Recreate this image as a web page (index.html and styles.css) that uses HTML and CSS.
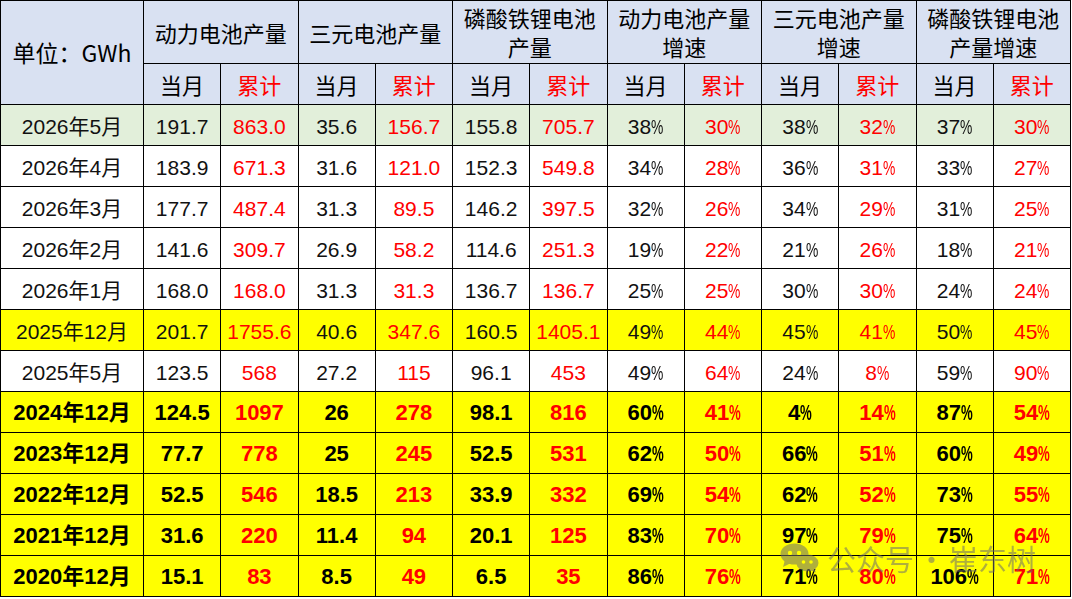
FILE: index.html
```html
<!DOCTYPE html>
<html lang="zh-CN">
<head>
<meta charset="utf-8">
<title>电池产量</title>
<link rel="stylesheet" href="styles.css">
</head>
<body>
<div class="wrap">
<table class="grid">
  <colgroup>
    <col class="c-first">
    <col><col><col><col><col><col><col><col><col><col><col><col>
  </colgroup>
  <thead>
    <tr class="h1">
      <th rowspan="2" class="unit">单位：GWh</th>
      <th colspan="2">动力电池产量</th>
      <th colspan="2">三元电池产量</th>
      <th colspan="2">磷酸铁锂电池产量</th>
      <th colspan="2">动力电池产量增速</th>
      <th colspan="2">三元电池产量增速</th>
      <th colspan="2">磷酸铁锂电池产量增速</th>
    </tr>
    <tr class="h2">
      <th>当月</th><th class="r">累计</th>
      <th>当月</th><th class="r">累计</th>
      <th>当月</th><th class="r">累计</th>
      <th>当月</th><th class="r">累计</th>
      <th>当月</th><th class="r">累计</th>
      <th>当月</th><th class="r">累计</th>
    </tr>
  </thead>
  <tbody>
    <tr class="green">
      <td>2026年5月</td><td>191.7</td><td class="r">863.0</td><td>35.6</td><td class="r">156.7</td><td>155.8</td><td class="r">705.7</td>
      <td>38<span class="pc">%</span></td><td class="r">30<span class="pc">%</span></td><td>38<span class="pc">%</span></td><td class="r">32<span class="pc">%</span></td><td>37<span class="pc">%</span></td><td class="r">30<span class="pc">%</span></td>
    </tr>
    <tr>
      <td>2026年4月</td><td>183.9</td><td class="r">671.3</td><td>31.6</td><td class="r">121.0</td><td>152.3</td><td class="r">549.8</td>
      <td>34<span class="pc">%</span></td><td class="r">28<span class="pc">%</span></td><td>36<span class="pc">%</span></td><td class="r">31<span class="pc">%</span></td><td>33<span class="pc">%</span></td><td class="r">27<span class="pc">%</span></td>
    </tr>
    <tr>
      <td>2026年3月</td><td>177.7</td><td class="r">487.4</td><td>31.3</td><td class="r">89.5</td><td>146.2</td><td class="r">397.5</td>
      <td>32<span class="pc">%</span></td><td class="r">26<span class="pc">%</span></td><td>34<span class="pc">%</span></td><td class="r">29<span class="pc">%</span></td><td>31<span class="pc">%</span></td><td class="r">25<span class="pc">%</span></td>
    </tr>
    <tr>
      <td>2026年2月</td><td>141.6</td><td class="r">309.7</td><td>26.9</td><td class="r">58.2</td><td>114.6</td><td class="r">251.3</td>
      <td>19<span class="pc">%</span></td><td class="r">22<span class="pc">%</span></td><td>21<span class="pc">%</span></td><td class="r">26<span class="pc">%</span></td><td>18<span class="pc">%</span></td><td class="r">21<span class="pc">%</span></td>
    </tr>
    <tr>
      <td>2026年1月</td><td>168.0</td><td class="r">168.0</td><td>31.3</td><td class="r">31.3</td><td>136.7</td><td class="r">136.7</td>
      <td>25<span class="pc">%</span></td><td class="r">25<span class="pc">%</span></td><td>30<span class="pc">%</span></td><td class="r">30<span class="pc">%</span></td><td>24<span class="pc">%</span></td><td class="r">24<span class="pc">%</span></td>
    </tr>
    <tr class="yellow">
      <td>2025年12月</td><td>201.7</td><td class="r">1755.6</td><td>40.6</td><td class="r">347.6</td><td>160.5</td><td class="r">1405.1</td>
      <td>49<span class="pc">%</span></td><td class="r">44<span class="pc">%</span></td><td>45<span class="pc">%</span></td><td class="r">41<span class="pc">%</span></td><td>50<span class="pc">%</span></td><td class="r">45<span class="pc">%</span></td>
    </tr>
    <tr>
      <td>2025年5月</td><td>123.5</td><td class="r">568</td><td>27.2</td><td class="r">115</td><td>96.1</td><td class="r">453</td>
      <td>49<span class="pc">%</span></td><td class="r">64<span class="pc">%</span></td><td>24<span class="pc">%</span></td><td class="r">8<span class="pc">%</span></td><td>59<span class="pc">%</span></td><td class="r">90<span class="pc">%</span></td>
    </tr>
    <tr class="yellow bold">
      <td>2024年12月</td><td>124.5</td><td class="r">1097</td><td>26</td><td class="r">278</td><td>98.1</td><td class="r">816</td>
      <td>60<span class="pc">%</span></td><td class="r">41<span class="pc">%</span></td><td>4<span class="pc">%</span></td><td class="r">14<span class="pc">%</span></td><td>87<span class="pc">%</span></td><td class="r">54<span class="pc">%</span></td>
    </tr>
    <tr class="yellow bold">
      <td>2023年12月</td><td>77.7</td><td class="r">778</td><td>25</td><td class="r">245</td><td>52.5</td><td class="r">531</td>
      <td>62<span class="pc">%</span></td><td class="r">50<span class="pc">%</span></td><td>66<span class="pc">%</span></td><td class="r">51<span class="pc">%</span></td><td>60<span class="pc">%</span></td><td class="r">49<span class="pc">%</span></td>
    </tr>
    <tr class="yellow bold">
      <td>2022年12月</td><td>52.5</td><td class="r">546</td><td>18.5</td><td class="r">213</td><td>33.9</td><td class="r">332</td>
      <td>69<span class="pc">%</span></td><td class="r">54<span class="pc">%</span></td><td>62<span class="pc">%</span></td><td class="r">52<span class="pc">%</span></td><td>73<span class="pc">%</span></td><td class="r">55<span class="pc">%</span></td>
    </tr>
    <tr class="yellow bold">
      <td>2021年12月</td><td>31.6</td><td class="r">220</td><td>11.4</td><td class="r">94</td><td>20.1</td><td class="r">125</td>
      <td>83<span class="pc">%</span></td><td class="r">70<span class="pc">%</span></td><td>97<span class="pc">%</span></td><td class="r">79<span class="pc">%</span></td><td>75<span class="pc">%</span></td><td class="r">64<span class="pc">%</span></td>
    </tr>
    <tr class="yellow bold">
      <td>2020年12月</td><td>15.1</td><td class="r">83</td><td>8.5</td><td class="r">49</td><td>6.5</td><td class="r">35</td>
      <td>86<span class="pc">%</span></td><td class="r">76<span class="pc">%</span></td><td>71<span class="pc">%</span></td><td class="r">80<span class="pc">%</span></td><td>106<span class="pc">%</span></td><td class="r">71<span class="pc">%</span></td>
    </tr>
  </tbody>
</table>

<div class="watermark">
  <svg class="wm-icon" width="44" height="30" viewBox="0 0 44 30">
    <defs>
      <mask id="wmmask">
        <rect x="0" y="0" width="44" height="30" fill="#fff"/>
        <circle cx="11" cy="10" r="2.2" fill="#000"/>
        <circle cx="20" cy="10" r="2.2" fill="#000"/>
        <circle cx="24.5" cy="19" r="1.8" fill="#000"/>
        <circle cx="32" cy="19" r="1.8" fill="#000"/>
      </mask>
    </defs>
    <g mask="url(#wmmask)" fill="#6e6e6e">
      <ellipse cx="15.5" cy="11" rx="14" ry="10.5"/>
      <path d="M6 17 L4 24 L12 20 Z"/>
      <ellipse cx="28.5" cy="20" rx="11" ry="8.5"/>
      <path d="M35 25 L37 29.5 L31 27 Z"/>
    </g>
  </svg>
  <span class="wm-text">公众号<span class="wm-dot">·</span>崔东树</span>
</div>
</div>
</body>
</html>
```

FILE: styles.css
```css
html, body {
  margin: 0;
  padding: 0;
  background: #ffffff;
}

.wrap {
  position: relative;
  width: 1072px;
  height: 599px;
  overflow: hidden;
}

.grid {
  border-collapse: collapse;
  table-layout: fixed;
  width: 1071px;
  font-family: "Liberation Sans", "Noto Sans CJK SC", sans-serif;
  font-size: 21px;
  color: #111;
}

.c-first {
  width: 143px;
}

.grid th,
.grid td {
  border: 1px solid #000;
  padding: 0 2px;
  text-align: center;
  vertical-align: middle;
  white-space: normal;
  overflow: hidden;
}

.grid thead th {
  background: #d9e1f2;
  font-family: "Noto Sans CJK SC", "Liberation Sans", sans-serif;
  font-weight: 400;
  font-size: 22px;
  line-height: 29px;
  color: #000;
}

.grid thead .unit {
  font-size: 23px;
}

.grid .h1 {
  height: 63px;
}

.grid .h2 {
  height: 41px;
}

.grid tbody tr {
  height: 41px;
}

.grid td {
  line-height: 26px;
  padding-top: 3px;
}

.grid .r {
  color: #ff0000;
}

.green td {
  background: #e2efda;
}

.yellow td {
  background: #ffff00;
}

.bold td {
  font-family: "Liberation Sans", "Noto Sans CJK SC", sans-serif;
  font-weight: 700;
  font-size: 22px;
  color: #000;
  padding-top: 2px;
}

.bold td.r {
  color: #ff0000;
}

.pc {
  display: inline-block;
  transform: scaleX(0.66);
  transform-origin: left center;
  margin-right: -6.3px;
}

.bold .pc {
  transform: scaleX(0.6);
  margin-right: -7.8px;
}

.watermark {
  position: absolute;
  left: 779px;
  top: 541px;
  display: flex;
  align-items: center;
  gap: 4px;
  opacity: 0.55;
  pointer-events: none;
}

.wm-icon {
  display: block;
}

.wm-text {
  font-family: "Noto Sans CJK SC", sans-serif;
  font-size: 29px;
  line-height: 34px;
  color: #6e6e6e;
}

.wm-dot {
  margin: 0 3px;
}
```
